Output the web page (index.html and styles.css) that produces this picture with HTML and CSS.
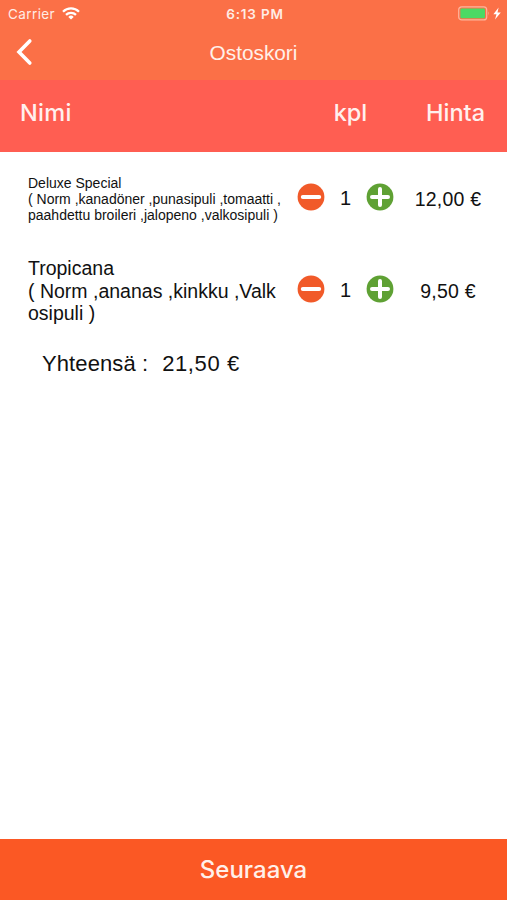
FILE: index.html
```html
<!DOCTYPE html>
<html lang="fi">
<head>
    <meta charset="UTF-8">
    <meta name="viewport" content="width=device-width, initial-scale=1.0">
    <title>Ostoskori</title>
    <link rel="stylesheet" href="styles.css">
</head>
<body>
    <header class="header">
        <div class="status-bar">
            <div class="carrier">
                <span>Carrier</span>
                <svg width="18" height="13" viewBox="0 0 18 13" fill="none" stroke="#fff" stroke-width="2.3">
                    <path d="M1 4.7a11.4 11.4 0 0 1 16 0"/>
                    <path d="M4 7.8a7.2 7.2 0 0 1 10 0"/>
                    <path d="M9 12.6L6.3 9.9a3.8 3.8 0 0 1 5.4 0z" fill="#fff" stroke="none"/>
                </svg>
            </div>
            <div class="time">6:13 PM</div>
            <div class="battery">
                <svg width="44" height="15" viewBox="0 0 44 15">
                    <rect x="0.7" y="0.9" width="28" height="13" rx="3" fill="none" stroke="#fdb59d" stroke-width="1.2"/>
                    <rect x="2.4" y="2.6" width="24.6" height="9.6" rx="1.2" fill="#4cd964"/>
                    <path d="M30.2 5.2q1.6 2.2 0 4.6z" fill="#fdb59d"/>
                    <path d="M40.6 1.4L35.4 8.2h3.1l-1.5 5.4 5.8-7.1h-3.3z" fill="#fff"/>
                </svg>
            </div>
        </div>
        <div class="nav-bar">
            <button class="back" aria-label="Takaisin">
                <svg width="18" height="28" viewBox="0 0 18 28" fill="none" stroke="#fff" stroke-width="3.6" stroke-linecap="round" stroke-linejoin="miter">
                    <path d="M14.8 3L4 14l10.8 11"/>
                </svg>
            </button>
            <h1>Ostoskori</h1>
        </div>
    </header>

    <div class="table-head">
        <span class="name">Nimi</span>
        <span class="count">kpl</span>
        <span class="price">Hinta</span>
    </div>

    <main class="cart">
        <div class="item">
            <div class="name small">Deluxe Special<br>( Norm ,kanadöner ,punasipuli ,tomaatti ,<br>paahdettu broileri ,jalopeno ,valkosipuli )</div>
            <div class="stepper">
                <button aria-label="Vähennä">
                    <svg width="28" height="28" viewBox="0 0 28 28">
                        <circle cx="14" cy="14" r="13.4" fill="#f15a29"/>
                        <path d="M5.8 14h16.4" stroke="#fff" stroke-width="4" stroke-linecap="round"/>
                    </svg>
                </button>
                <span>1</span>
                <button aria-label="Lisää">
                    <svg width="28" height="28" viewBox="0 0 28 28">
                        <circle cx="14" cy="14" r="13.4" fill="#5fa134"/>
                        <path d="M6 14h16M14 6v16" stroke="#fff" stroke-width="4" stroke-linecap="round"/>
                    </svg>
                </button>
            </div>
            <div class="price">12,00 €</div>
        </div>
        <div class="item">
            <div class="name">Tropicana<br>( Norm ,ananas ,kinkku ,Valk<br>osipuli )</div>
            <div class="stepper">
                <button aria-label="Vähennä">
                    <svg width="28" height="28" viewBox="0 0 28 28">
                        <circle cx="14" cy="14" r="13.4" fill="#f15a29"/>
                        <path d="M5.8 14h16.4" stroke="#fff" stroke-width="4" stroke-linecap="round"/>
                    </svg>
                </button>
                <span>1</span>
                <button aria-label="Lisää">
                    <svg width="28" height="28" viewBox="0 0 28 28">
                        <circle cx="14" cy="14" r="13.4" fill="#5fa134"/>
                        <path d="M6 14h16M14 6v16" stroke="#fff" stroke-width="4" stroke-linecap="round"/>
                    </svg>
                </button>
            </div>
            <div class="price">9,50 €</div>
        </div>
        <div class="total"><span>Yhteensä :</span><span class="sum">21,50 €</span></div>
    </main>

    <button class="next">Seuraava</button>
</body>
</html>
```
FILE: styles.css
```css
* {
    box-sizing: border-box;
}
body {
    margin: 0;
    height: 100vh;
    display: flex;
    flex-direction: column;
    background: #fff;
    color: #111;
    font-family: "Liberation Sans", Arial, sans-serif;
}
button {
    padding: 0;
    border: none;
    background: none;
    cursor: pointer;
}
svg {
    display: block;
}
.header {
    height: 80px;
    background: #fb7047;
    color: #fff;
}
.status-bar {
    display: grid;
    grid-template-columns: 1fr auto 1fr;
    align-items: center;
    height: 27px;
    padding: 0 5px 0 8px;
    font-family: Inter, sans-serif;
    font-size: 13.5px;
    color: #ffece5;
}
.carrier {
    display: flex;
    align-items: center;
    gap: 7px;
}
.carrier span {
    letter-spacing: 0.4px;
}
.time {
    font-weight: 600;
    font-size: 13.5px;
    letter-spacing: 0.8px;
}
.battery {
    justify-self: end;
}
.nav-bar {
    display: grid;
    grid-template-columns: 60px 1fr 60px;
    align-items: center;
    height: 50px;
}
.back {
    justify-self: start;
    margin-left: 15px;
}
.nav-bar h1 {
    margin: 0;
    padding-top: 2px;
    text-align: center;
    font-size: 20.8px;
    font-weight: normal;
    color: #fff0ea;
}
.table-head {
    display: grid;
    grid-template-columns: 297px 107px 103px;
    align-items: center;
    height: 72px;
    padding-bottom: 7px;
    background: #ff5e52;
    color: #fff0ee;
    font-family: Inter, sans-serif;
    font-size: 23.5px;
    font-weight: 500;
}
.table-head .name {
    padding-left: 20px;
    letter-spacing: 0.3px;
}
.table-head .count,
.table-head .price {
    text-align: center;
}
.cart {
    flex: 1;
}
.item {
    display: grid;
    grid-template-columns: 297px 97px 108px;
    align-items: center;
    height: 92px;
}
.item .name {
    padding: 2px 0 0 28px;
    font-size: 19.5px;
    line-height: 22.5px;
    white-space: nowrap;
}
.item .name.small {
    font-size: 14px;
    line-height: 16.3px;
}
.stepper {
    display: flex;
    align-items: center;
    justify-content: space-between;
    padding-bottom: 2px;
    font-size: 20px;
}
.stepper span {
    padding-top: 3px;
}
.item .price {
    padding-top: 2px;
    text-align: center;
    font-size: 19.5px;
    letter-spacing: 0.2px;
}
.total {
    display: flex;
    gap: 14px;
    padding: 15px 0 0 42px;
    font-size: 22px;
    line-height: 26px;
    letter-spacing: 0.1px;
}
.total .sum {
    letter-spacing: 0.6px;
}
.next {
    height: 61px;
    background: #fb5824;
    color: #fff0ea;
    font-family: Inter, sans-serif;
    font-size: 24px;
    font-weight: 500;
}
```
